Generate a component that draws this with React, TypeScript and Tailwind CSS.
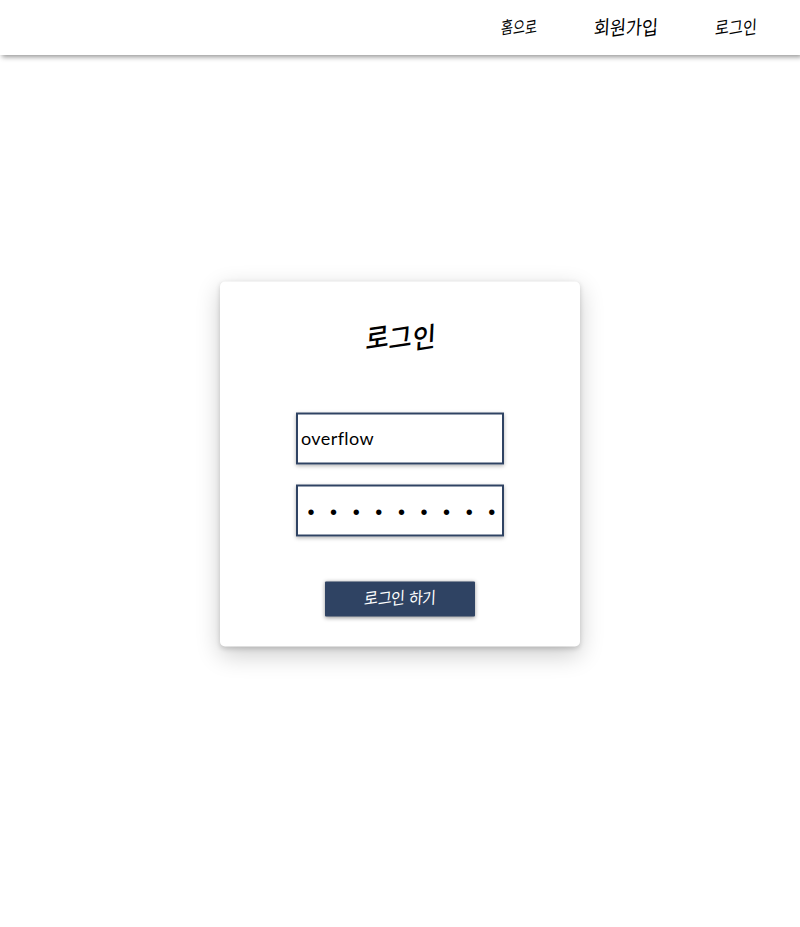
const hand = "font-['Noto_Sans_CJK_KR',sans-serif]";

const links = [
  { label: '홈으로', box: 'w-9', text: 'text-[13px] scale-y-[1.3]' },
  { label: '회원가입', box: 'w-16', text: 'text-[17.5px] scale-y-[1.1]' },
  { label: '로그인', box: 'w-[42px]', text: 'text-[15px] scale-y-[1.2]' },
];

const field =
  'block h-[52px] w-52 border-2 border-[#2f4363] bg-white text-black shadow-[0_1px_4px_rgba(0,0,0,0.3)] outline-none';

// Tilts each syllable on its own so the line keeps a level baseline.
function Handwritten({ text }: { text: string }) {
  return (
    <>
      {Array.from(text).map((syllable, index) => (
        <span key={index} className="inline-block -skew-x-3 -skew-y-8 whitespace-pre">
          {syllable}
        </span>
      ))}
    </>
  );
}

export default function App() {
  return (
    <div className={`relative h-[927px] w-full overflow-hidden bg-white text-black ${hand}`}>
      <header className="h-[55px] bg-white shadow-[2px_2px_5px_rgba(0,0,0,0.42)]">
        <nav className="flex h-full items-center justify-end gap-[57px] pr-[43px] pb-0.5">
          {links.map((link) => (
            <a key={link.label} href="#" className={`flex justify-center ${link.box}`}>
              <span className={`inline-block whitespace-nowrap leading-5 ${link.text}`}>
                <Handwritten text={link.label} />
              </span>
            </a>
          ))}
        </nav>
      </header>

      <main className="flex justify-center pt-[226px]">
        <form
          className="flex h-[365px] w-[360px] translate-y-[0.5px] flex-col items-center rounded-[5px] bg-white shadow-[0_2px_5px_rgba(0,0,0,0.16),0_8px_24px_rgba(0,0,0,0.2)]"
          onSubmit={(event) => event.preventDefault()}
        >
          <h1 className="mt-[34px] h-10 pl-0.5 text-[25px] leading-10 font-medium">
            <span className="inline-block scale-y-[1.1]">
              <Handwritten text="로그인" />
            </span>
          </h1>
          <input
            type="text"
            aria-label="아이디"
            defaultValue="overflow"
            className={`mt-[57px] pb-[3px] pl-[3px] font-['Lato',sans-serif] text-[18px] tracking-[0.4px] ${field}`}
          />
          <input
            type="password"
            aria-label="비밀번호"
            defaultValue="overflow1"
            className={`mt-5 pt-[3px] pl-[9.5px] font-['Liberation_Sans',sans-serif] text-[20px] tracking-[15.6px] ${field}`}
          />
          <button
            type="submit"
            className="mt-[45px] h-[35px] w-[150px] rounded-[1px] bg-[#2f4363] pb-0.5 text-[15px] text-white shadow-[0_1px_4px_rgba(0,0,0,0.4)]"
          >
            <span className="inline-block scale-y-[1.1] leading-5">
              <Handwritten text="로그인 하기" />
            </span>
          </button>
        </form>
      </main>
    </div>
  );
}
